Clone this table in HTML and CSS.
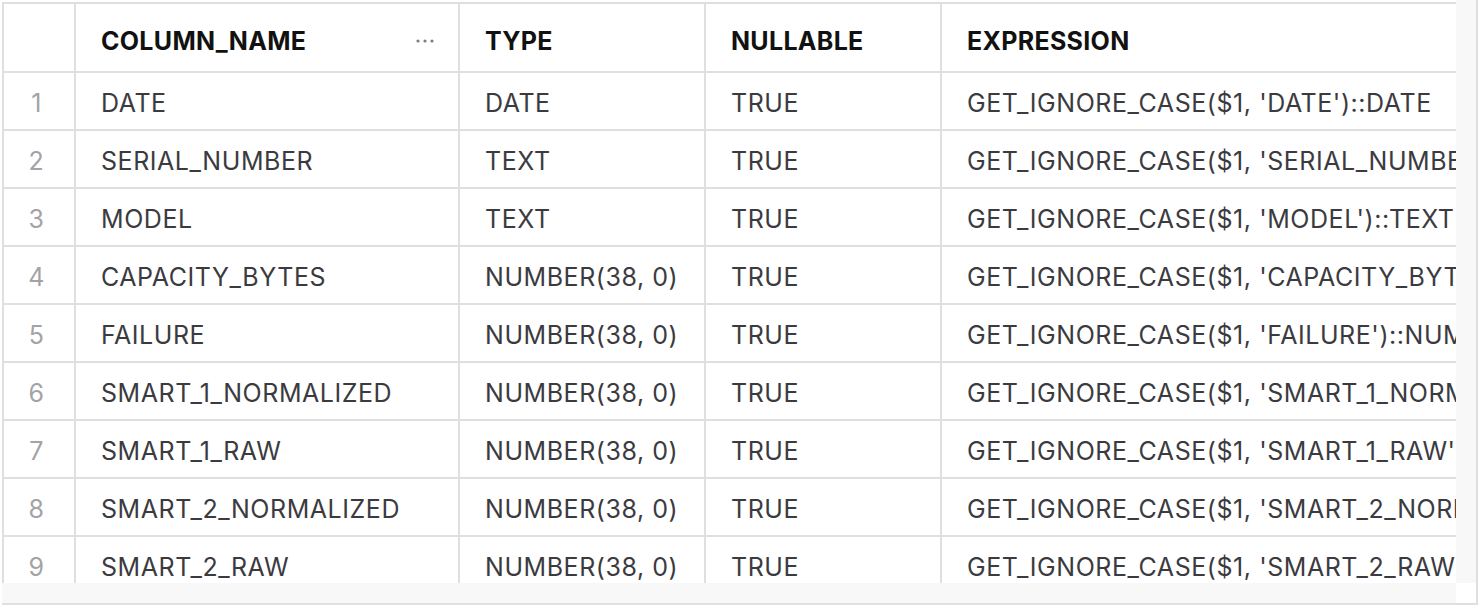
FILE: index.html
```html
<!DOCTYPE html>
<html>
<head>
<meta charset="utf-8">
<link rel="stylesheet" href="styles.css">
</head>
<body>
<div class="frame">
  <div class="viewport">
    <div class="grid">
      <div class="cell head num"></div>
      <div class="cell head"><span>COLUMN_NAME</span><svg class="more" width="18" height="4" viewBox="0 0 18 4"><circle cx="2" cy="2" r="1.6"/><circle cx="9" cy="2" r="1.6"/><circle cx="16" cy="2" r="1.6"/></svg></div>
      <div class="cell head">TYPE</div>
      <div class="cell head">NULLABLE</div>
      <div class="cell head">EXPRESSION</div>

      <div class="cell num">1</div><div class="cell">DATE</div><div class="cell">DATE</div><div class="cell">TRUE</div><div class="cell">GET_IGNORE_CASE($1, 'DATE')::DATE</div>
      <div class="cell num">2</div><div class="cell">SERIAL_NUMBER</div><div class="cell">TEXT</div><div class="cell">TRUE</div><div class="cell">GET_IGNORE_CASE($1, 'SERIAL_NUMBER')::TEXT</div>
      <div class="cell num">3</div><div class="cell">MODEL</div><div class="cell">TEXT</div><div class="cell">TRUE</div><div class="cell">GET_IGNORE_CASE($1, 'MODEL')::TEXT</div>
      <div class="cell num">4</div><div class="cell">CAPACITY_BYTES</div><div class="cell">NUMBER(38, 0)</div><div class="cell">TRUE</div><div class="cell">GET_IGNORE_CASE($1, 'CAPACITY_BYTES')::NUMBER(38, 0)</div>
      <div class="cell num">5</div><div class="cell">FAILURE</div><div class="cell">NUMBER(38, 0)</div><div class="cell">TRUE</div><div class="cell">GET_IGNORE_CASE($1, 'FAILURE')::NUMBER(38, 0)</div>
      <div class="cell num">6</div><div class="cell">SMART_1_NORMALIZED</div><div class="cell">NUMBER(38, 0)</div><div class="cell">TRUE</div><div class="cell">GET_IGNORE_CASE($1, 'SMART_1_NORMALIZED')::NUMBER(38, 0)</div>
      <div class="cell num">7</div><div class="cell">SMART_1_RAW</div><div class="cell">NUMBER(38, 0)</div><div class="cell">TRUE</div><div class="cell">GET_IGNORE_CASE($1, 'SMART_1_RAW')::NUMBER(38, 0)</div>
      <div class="cell num">8</div><div class="cell">SMART_2_NORMALIZED</div><div class="cell">NUMBER(38, 0)</div><div class="cell">TRUE</div><div class="cell">GET_IGNORE_CASE($1, 'SMART_2_NORMALIZED')::NUMBER(38, 0)</div>
      <div class="cell num">9</div><div class="cell">SMART_2_RAW</div><div class="cell">NUMBER(38, 0)</div><div class="cell">TRUE</div><div class="cell">GET_IGNORE_CASE($1, 'SMART_2_RAW')::NUMBER(38, 0)</div>
      <div class="cell num">10</div><div class="cell">SMART_3_NORMALIZED</div><div class="cell">NUMBER(38, 0)</div><div class="cell">TRUE</div><div class="cell">GET_IGNORE_CASE($1, 'SMART_3_NORMALIZED')::NUMBER(38, 0)</div>
    </div>
  </div>
  <div class="vtrack"></div>
  <div class="htrack"></div>
  <div class="corner"></div>
</div>
</body>
</html>
```

FILE: styles.css
```css
html, body {
  margin: 0;
  padding: 0;
  background: #ffffff;
}
body {
  font-family: Inter, "Noto Sans", "Liberation Sans", sans-serif;
}
.frame {
  margin-left: 2px;
  width: 1476px;
  height: 605px;
  box-sizing: border-box;
  display: grid;
  grid-template-columns: 1454px 20px;
  grid-template-rows: 583px 20px;
  border-right: 2px solid #dfdfdf;
  border-bottom: 2px solid #dfdfdf;
}
.viewport {
  overflow: hidden;
  padding-top: 2px;
  box-sizing: border-box;
}
.grid {
  display: grid;
  grid-template-columns: 70px 382px 244px 234px 720px;
  grid-template-rows: 67px;
  grid-auto-rows: 56px;
  gap: 2px;
  padding: 2px 0 0 2px;
  background: #dfdfdf;
  width: max-content;
}
.cell {
  background: #ffffff;
  display: flex;
  align-items: center;
  padding: 3px 24px 0 25px;
  font-size: 25px;
  letter-spacing: 0.55px;
  color: #3b3b3f;
  white-space: nowrap;
  overflow: hidden;
}
.cell.head {
  font-weight: 700;
  color: #111111;
  font-size: 25px;
  letter-spacing: 0.3px;
  padding-top: 6px;
  justify-content: space-between;
}
.cell.num {
  justify-content: center;
  padding: 3px 5px 0 0;
  color: #a3a3a6;
}
.more {
  fill: #7d7d80;
  margin-right: 0;
}
.vtrack {
  background: #f8f8f8;
}
.htrack {
  background: #f8f8f8;
}
.corner {
  background: #ffffff;
}
```
